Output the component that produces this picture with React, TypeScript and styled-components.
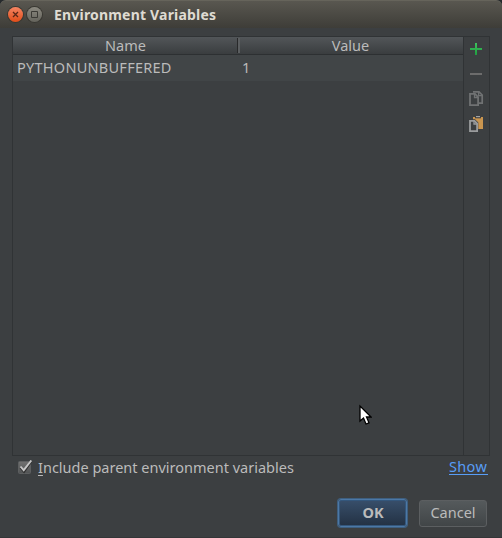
import React from "react";
import styled, { createGlobalStyle } from "styled-components";

const GlobalStyle = createGlobalStyle`
  * { box-sizing: border-box; }
  body { margin: 0; background: #3c3f41; overflow: hidden; }
`;

const Dialog = styled.div`
  width: 502px;
  height: 538px;
  display: flex;
  flex-direction: column;
  background: #3c3f41;
  color: #bbbbbb;
  font: 14.5px/18px "Noto Sans", sans-serif;
  cursor: default;
  box-shadow: inset 0 -1px #343638;
`;

const TitleBar = styled.header`
  height: 28px;
  flex: none;
  display: flex;
  align-items: center;
  padding: 0 0 0 8px;
  border-top: 1px solid #66645b;
  border-radius: 6px 6px 0 0;
  background: linear-gradient(#595750, #3e3d38);
  box-shadow: -4px -4px 0 4px #262a2c;
`;

const WindowButton = styled.span<{ $close?: boolean }>`
  width: 15px;
  height: 15px;
  margin-right: 4px;
  border-radius: 50%;
  display: grid;
  place-items: center;
  background: ${(p) =>
    p.$close ? "linear-gradient(#f58563, #e24d18)" : "linear-gradient(#8b8980, #65645c)"};
  box-shadow: 0 0 0 1px #393832;
  svg { display: block; }
`;

const Title = styled.h1`
  margin: 0 0 0 8px;
  font-size: 14px;
  line-height: 18px;
  font-weight: 700;
  color: #dfdbd2;
  letter-spacing: 0.19px;
`;

const Panel = styled.section`
  height: 420px;
  flex: none;
  margin: 8px 12px 0;
  display: flex;
  border: 1px solid #303335;
`;

const Table = styled.div`
  width: 451px;
  border-right: 1px solid #303335;
`;

const HeaderRow = styled.div`
  height: 18px;
  display: grid;
  grid-template-columns: 225px 1fr;
  background: linear-gradient(#525659, #3a3d3f);
  border-bottom: 1px solid #2d3032;
`;

const HeaderCell = styled.div<{ $divided?: boolean }>`
  position: relative;
  text-align: center;
  line-height: 16px;
  ${(p) =>
    p.$divided &&
    `&::after { content: ""; position: absolute; z-index: 1; right: -2px; top: 1px; width: 2px; height: 15px;
      border-left: 1px solid #28292a; background: #5b5e60; }`}
`;

const DataRow = styled.div`
  height: 26px;
  display: grid;
  grid-template-columns: 225px 1fr;
  background: #414547;
`;

const Cell = styled.div<{ $spacing?: number }>`
  padding-left: 4px;
  line-height: 24px;
  letter-spacing: ${(p) => p.$spacing ?? 0}px;
`;

const Tools = styled.nav`
  flex: 1;
  display: flex;
  flex-direction: column;
`;

const Tool = styled.span`
  width: 25px;
  height: 25px;
  flex: none;
  svg { display: block; }
`;

const Options = styled.div`
  height: 24px;
  flex: none;
  display: flex;
  align-items: center;
  justify-content: space-between;
  padding: 0 14px 0 18px;
`;

const CheckLabel = styled.label`
  display: flex;
  align-items: center;
`;

const CheckIcon = styled.svg`
  margin: 0 5px 2px 0;
`;

const LabelText = styled.span`
  margin-bottom: 2px;
`;

const Mnemonic = styled.span`
  text-decoration: underline;
  text-decoration-thickness: 1px;
  text-underline-offset: 2px;
  text-decoration-skip-ink: none;
`;

const Link = styled.a`
  width: 39px;
  height: 17px;
  margin-bottom: 3px;
  color: #589df6;
  border-bottom: 1px solid #589df6;
  line-height: 16px;
  letter-spacing: 0.35px;
`;

const Actions = styled.footer`
  display: flex;
  gap: 12px;
  padding: 19px 0 0 338px;
`;

const Button = styled.button<{ $primary?: boolean }>`
  width: ${(p) => (p.$primary ? 69 : 68)}px;
  height: ${(p) => (p.$primary ? 28 : 27)}px;
  margin: ${(p) => (p.$primary ? 0 : 1)}px 0 0;
  padding: 0 0 ${(p) => (p.$primary ? 2 : 3)}px ${(p) => (p.$primary ? 1 : 0)}px;
  border-radius: 3px;
  border: 1px solid ${(p) => (p.$primary ? "#4c78a6" : "#5c5f61")};
  background: ${(p) =>
    p.$primary ? "linear-gradient(#384f6b, #233143)" : "linear-gradient(#555a5c, #414547)"};
  box-shadow: ${(p) => (p.$primary ? "0 0 0 1px #3e5f80, inset 0 0 0 1px #34577c" : "none")};
  color: #bbbbbb;
  font: ${(p) => (p.$primary ? 700 : 400)} 14.5px/18px "Noto Sans", sans-serif;
`;

const Pointer = styled.svg`
  position: absolute;
  left: 358px;
  top: 404px;
`;

const PlusIcon = () => (
  <svg width="25" height="25">
    <defs>
      <linearGradient id="plus" x1="0" y1="0" x2="0" y2="1">
        <stop offset="0" stopColor="#3ec35d" />
        <stop offset="1" stopColor="#1f9d40" />
      </linearGradient>
    </defs>
    <path d="M11 6h2v5h5v2h-5v5h-2v-5H6v-2h5z" fill="url(#plus)" />
  </svg>
);

const MinusIcon = () => (
  <svg width="25" height="25">
    <path d="M6 11h12v2H6z" fill="#6c6c6c" />
  </svg>
);

const CopyIcon = () => (
  <svg width="25" height="25" fill="none" stroke="#707273">
    <path d="M9 4.9h6L18.2 8v8.2H15" strokeWidth="1.7" />
    <path d="M14.6 5v3.6h4" strokeWidth="1.3" />
    <path d="M6 6.9h5l3.1 3.1v8.1H6z" strokeWidth="1.8" fill="#3c3f41" />
    <path d="M10.5 7v3.5H14" strokeWidth="1.3" />
  </svg>
);

const PasteIcon = () => (
  <svg width="25" height="25">
    <path d="M9 5h10v12h-5L9 9z" fill="#c9954f" />
    <path d="M11 5h6v1.3h-6z" fill="#3c3f41" />
    <path d="M12 4h4v1.2h-4z" fill="#a3a3a3" />
    <path d="M4 7.3h7l3.3 3.3V18H4z" fill="#3c3f41" />
    <path d="M6 8.9h4.5l2.6 2.6v7.6H6z" fill="#3c3f41" stroke="#9a9c9d" strokeWidth="1.8" />
    <path d="M10 9v3h3" fill="none" stroke="#9a9c9d" strokeWidth="1.3" />
  </svg>
);

export default function App() {
  return (
    <>
      <GlobalStyle />
      <Dialog>
        <TitleBar>
          <WindowButton $close>
            <svg width="9" height="9">
              <path d="M2 2l5 5m0-5l-5 5" stroke="#5a2717" strokeWidth="1.3" />
            </svg>
          </WindowButton>
          <WindowButton>
            <svg width="9" height="9">
              <path d="M1.5 1.5h6v6h-6z" fill="none" stroke="#3b3a35" />
            </svg>
          </WindowButton>
          <Title>Environment Variables</Title>
        </TitleBar>
        <Panel>
          <Table>
            <HeaderRow>
              <HeaderCell $divided>Name</HeaderCell>
              <HeaderCell>Value</HeaderCell>
            </HeaderRow>
            <DataRow>
              <Cell $spacing={0.26}>PYTHONUNBUFFERED</Cell>
              <Cell>1</Cell>
            </DataRow>
          </Table>
          <Tools>
            <Tool><PlusIcon /></Tool>
            <Tool><MinusIcon /></Tool>
            <Tool><CopyIcon /></Tool>
            <Tool><PasteIcon /></Tool>
          </Tools>
        </Panel>
        <Options>
          <CheckLabel>
            <CheckIcon width="15" height="15">
              <defs>
                <linearGradient id="box" x1="0" y1="0" x2="0" y2="1">
                  <stop offset="0" stopColor="#717171" />
                  <stop offset="1" stopColor="#515354" />
                </linearGradient>
              </defs>
              <rect x="0.5" y="1.5" width="12" height="12" rx="1" fill="url(#box)" stroke="#5d5f60" />
              <path d="M2.5 7.5l3.5 4 7-10" fill="none" stroke="#303030" strokeWidth="2.5" />
              <path d="M2.5 6.5l3.2 3.7L13.3 0.5" fill="none" stroke="#c6c6c6" strokeWidth="1.9" />
            </CheckIcon>
            <LabelText><Mnemonic>I</Mnemonic>nclude parent environment variables</LabelText>
          </CheckLabel>
          <Link>Show</Link>
        </Options>
        <Actions>
          <Button $primary>OK</Button>
          <Button>Cancel</Button>
        </Actions>
        <Pointer width="14" height="22">
          <path d="M2 2v15l3.5-3 2.5 6 3-1.2-2.5-5.8H13z" fill="#fff" stroke="#000" strokeWidth="1.3" />
        </Pointer>
      </Dialog>
    </>
  );
}
